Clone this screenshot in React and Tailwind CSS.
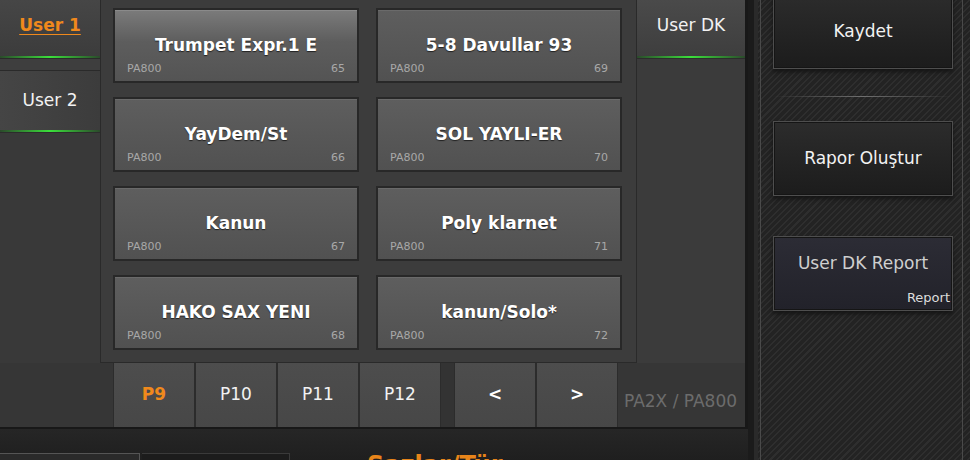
import React from "react";

const voices = [
  { name: "Trumpet Expr.1 E", num: 65, active: true },
  { name: "5-8 Davullar 93", num: 69 },
  { name: "YayDem/St", num: 66 },
  { name: "SOL YAYLI-ER", num: 70 },
  { name: "Kanun", num: 67 },
  { name: "Poly klarnet", num: 71 },
  { name: "HAKO SAX YENI", num: 68 },
  { name: "kanun/Solo*", num: 72 },
];

const pages = ["P9", "P10", "P11", "P12"];

function GreenLine() {
  return (
    <div className="h-[2px] bg-[linear-gradient(90deg,#2b4a2b,#3be03b_50%,#2b4a2b)]" />
  );
}

function VoiceCard({ name, num, active }) {
  return (
    <div
      className={
        active
          ? "h-[75px] flex flex-col border-2 border-[#282828] bg-[linear-gradient(180deg,#7b7b7b,#5d5d5d_45%,#545454)] shadow-[inset_0_1px_0_#8a8a8a]"
          : "h-[75px] flex flex-col border-2 border-[#282828] bg-[linear-gradient(180deg,#5e5e5e,#515151)] shadow-[inset_0_1px_0_#6a6a6a]"
      }
    >
      <div className="pt-[25px] text-center text-[17px] leading-[20px] font-bold text-white [text-shadow:0_1px_1px_#222]">
        {name}
      </div>
      <div className="mt-auto mb-[5px] px-[12px] flex justify-between text-[11px] leading-[14px] text-[#a8a8a8]">
        <span>PA800</span>
        <span>{num}</span>
      </div>
    </div>
  );
}

function SideButton({ children }) {
  return (
    <div className="h-[75px] flex items-center justify-center border border-[#4e4e4e] bg-[linear-gradient(180deg,#2c2c2c,#1c1c1c)] shadow-[inset_0_0_0_1px_#151515,0_3px_4px_#151515] text-[17px] text-[#f2f2f2]">
      {children}
    </div>
  );
}

export default function App() {
  return (
    <div className="flex w-[970px] h-[460px] overflow-hidden bg-[#222] font-['DejaVu_Sans',sans-serif]">
      {/* main area */}
      <div className="flex flex-col w-[748px] shrink-0">
        <div className="h-[429px] shrink-0 flex flex-col bg-[#383838] border-r-[3px] border-b-2 border-[#181818]">
          <div className="flex h-[363px] shrink-0">
            {/* user tabs */}
            <div className="w-[100px] flex flex-col">
              <div className="h-[56px] flex items-center justify-center pb-[5px] bg-[linear-gradient(180deg,#464646,#3c3c3c)]">
                <span className="text-[17px] font-bold text-[#f0891c] underline underline-offset-[3px]">
                  User 1
                </span>
              </div>
              <GreenLine />
              <div className="h-[13px] bg-[#3e3e3e] border-y border-[#2a2a2a]" />
              <div className="h-[59px] flex items-center justify-center bg-[linear-gradient(90deg,#454545,#3c3c3c)] text-[17px] text-[#f2f2f2]">
                User 2
              </div>
              <GreenLine />
              <div className="flex-1 border-t border-[#2c2c2c] bg-[#393939]" />
            </div>

            {/* voice grid */}
            <div className="w-[537px] border-x border-b border-[#2a2a2a] bg-[#3c3c3c] pl-[12px] pt-[8px] grid grid-cols-[246px_246px] auto-rows-[75px] gap-x-[17px] gap-y-[14px]">
              {voices.map((v) => (
                <VoiceCard key={v.num} {...v} />
              ))}
            </div>

            {/* user dk tab */}
            <div className="flex-1 flex flex-col">
              <div className="h-[56px] flex items-center justify-center pb-[5px] bg-[linear-gradient(180deg,#4a4a4a,#3e3e3e)] text-[17px] text-[#f2f2f2]">
                User DK
              </div>
              <GreenLine />
              <div className="flex-1 border-t border-[#2c2c2c] bg-[#3b3b3b]" />
            </div>
          </div>

          {/* page buttons */}
          <div className="flex flex-1 min-h-0 bg-[#363636]">
            <div className="w-[113px]" />
            <div className="flex gap-[2px] bg-[#2c2c2c] border-x border-[#2c2c2c]">
              {pages.map((p, i) => (
                <div
                  key={p}
                  className={
                    i === 0
                      ? "w-[80px] flex items-center justify-center bg-[linear-gradient(180deg,#4d4d4d,#474747)] text-[17px] font-bold text-[#f0891c]"
                      : "w-[80px] flex items-center justify-center bg-[linear-gradient(180deg,#4d4d4d,#474747)] text-[17px] text-[#f2f2f2]"
                  }
                >
                  {p}
                </div>
              ))}
            </div>
            <div className="w-[13px] bg-[#333]" />
            <div className="flex gap-[2px] bg-[#2c2c2c] border-x border-[#2c2c2c]">
              <div className="w-[80px] flex items-center justify-center bg-[linear-gradient(180deg,#4d4d4d,#474747)] text-[17px] font-bold text-white">
                &lt;
              </div>
              <div className="w-[80px] flex items-center justify-center bg-[linear-gradient(180deg,#4d4d4d,#474747)] text-[17px] font-bold text-white">
                &gt;
              </div>
            </div>
            <div className="ml-[6px] mt-[28px] text-[17px] leading-[20px] text-[#6c6c6c] whitespace-nowrap">
              PA2X / PA800
            </div>
          </div>
        </div>

        {/* bottom strip */}
        <div className="flex-1 min-h-0 overflow-hidden flex items-start bg-[linear-gradient(180deg,#262626,#1f1f1f)]">
          <div className="mt-[24px] w-[140px] h-[10px] shrink-0 border-t border-r border-[#555] bg-[#2a2a2a]" />
          <div className="mt-[24px] ml-[2px] w-[148px] h-[10px] shrink-0 border-t border-r border-[#3a3a3a] bg-[#1c1c1c]" />
          <div className="ml-[77px] mt-[22px] text-[24px] leading-[28px] font-bold text-[#e8851a] whitespace-nowrap">
            Sazlar/Tür
          </div>
        </div>
      </div>

      {/* right pane */}
      <div className="flex-1 flex">
        <div className="w-[10px] bg-[#1b1b1b] border-r-[4px] border-[#2a2a2a]" />
        <div className="flex-1 flex bg-[repeating-linear-gradient(135deg,#2e2e2e_0px,#2e2e2e_1.5px,#232323_1.5px,#232323_4.5px)]">
          <div className="ml-[2px] w-[203px] border-x border-[#4a4a4a] pl-[12px] pr-[9px] flex flex-col">
            <div className="-mt-[6px]">
              <SideButton>Kaydet</SideButton>
            </div>
            <div className="mt-[27px] h-px bg-[linear-gradient(90deg,transparent,#6f6f6f_50%,transparent)]" />
            <div className="mt-[24px]">
              <SideButton>Rapor Oluştur</SideButton>
            </div>
            <div className="mt-[40px] h-[75px] flex flex-col border border-[#4e4e4e] bg-[linear-gradient(180deg,#2c2c35,#22222a)] shadow-[inset_0_0_0_1px_#151515,0_3px_4px_#151515]">
              <div className="pt-[16px] text-center text-[17px] leading-[20px] text-[#cfcfcf]">
                User DK Report
              </div>
              <div className="mt-auto mb-[4px] self-end pr-[2px] text-[13px] leading-[16px] text-[#dcdcdc]">
                Report
              </div>
            </div>
          </div>
        </div>
      </div>
    </div>
  );
}
